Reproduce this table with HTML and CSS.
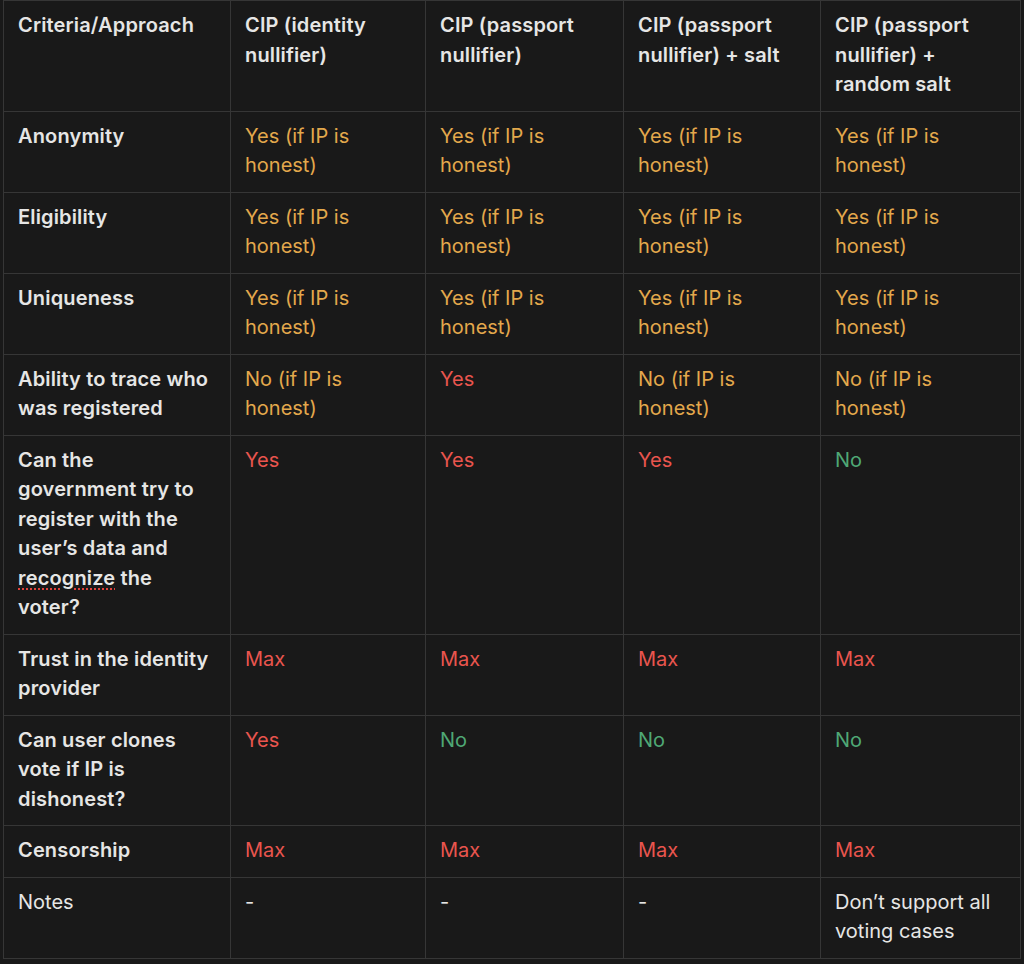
FILE: index.html
```html
<!DOCTYPE html>
<html lang="en">
<head>
<meta charset="utf-8">
<title>Criteria comparison</title>
<link rel="stylesheet" href="styles.css">
</head>
<body>
<table class="grid">
  <colgroup>
    <col class="c1"><col class="c2"><col class="c3"><col class="c4"><col class="c5">
  </colgroup>
  <tbody>
    <tr class="head">
      <td class="b">Criteria/Approach</td>
      <td class="b">CIP (identity nullifier)</td>
      <td class="b">CIP (passport nullifier)</td>
      <td class="b">CIP (passport nullifier) + salt</td>
      <td class="b">CIP (passport nullifier) + random salt</td>
    </tr>
    <tr>
      <td class="b">Anonymity</td>
      <td class="o">Yes (if IP is honest)</td>
      <td class="o">Yes (if IP is honest)</td>
      <td class="o">Yes (if IP is honest)</td>
      <td class="o">Yes (if IP is honest)</td>
    </tr>
    <tr>
      <td class="b">Eligibility</td>
      <td class="o">Yes (if IP is honest)</td>
      <td class="o">Yes (if IP is honest)</td>
      <td class="o">Yes (if IP is honest)</td>
      <td class="o">Yes (if IP is honest)</td>
    </tr>
    <tr>
      <td class="b">Uniqueness</td>
      <td class="o">Yes (if IP is honest)</td>
      <td class="o">Yes (if IP is honest)</td>
      <td class="o">Yes (if IP is honest)</td>
      <td class="o">Yes (if IP is honest)</td>
    </tr>
    <tr>
      <td class="b">Ability to trace who was registered</td>
      <td class="o">No (if IP is honest)</td>
      <td class="r">Yes</td>
      <td class="o">No (if IP is honest)</td>
      <td class="o">No (if IP is honest)</td>
    </tr>
    <tr>
      <td class="b">Can the government try to register with the user’s data and <span class="spell">recognize</span> the voter?</td>
      <td class="r">Yes</td>
      <td class="r">Yes</td>
      <td class="r">Yes</td>
      <td class="g">No</td>
    </tr>
    <tr>
      <td class="b">Trust in the identity provider</td>
      <td class="r">Max</td>
      <td class="r">Max</td>
      <td class="r">Max</td>
      <td class="r">Max</td>
    </tr>
    <tr>
      <td class="b">Can user clones vote if IP is dishonest?</td>
      <td class="r">Yes</td>
      <td class="g">No</td>
      <td class="g">No</td>
      <td class="g">No</td>
    </tr>
    <tr>
      <td class="b">Censorship</td>
      <td class="r">Max</td>
      <td class="r">Max</td>
      <td class="r">Max</td>
      <td class="r">Max</td>
    </tr>
    <tr>
      <td>Notes</td>
      <td>-</td>
      <td>-</td>
      <td>-</td>
      <td>Don’t support all voting cases</td>
    </tr>
  </tbody>
</table>
</body>
</html>
```

FILE: styles.css
```css
html, body {
  margin: 0;
  padding: 0;
  background: #191919;
}
body {
  font-family: Inter, "Noto Sans", "Liberation Sans", sans-serif;
  font-size: 20px;
  line-height: 29.5px;
  color: #e6e6e5;
}
.grid {
  margin-left: 3px;
  border-collapse: collapse;
  table-layout: fixed;
  width: 1017px;
}
.c1 { width: 227px; }
.c2 { width: 195px; }
.c3 { width: 198px; }
.c4 { width: 197px; }
.c5 { width: 200px; }
.grid td {
  border: 1px solid #363636;
  padding: 10px 18px 11px 14px;
  vertical-align: top;
  text-align: left;
}
.b {
  font-weight: 600;
  letter-spacing: 0.15px;
}
.o { color: #e3a84c; }
.r { color: #e9554e; }
.g { color: #4fa875; }
.spell {
  text-decoration: underline dotted #e0413a;
  text-decoration-thickness: 2px;
  text-underline-offset: 4px;
}
```
